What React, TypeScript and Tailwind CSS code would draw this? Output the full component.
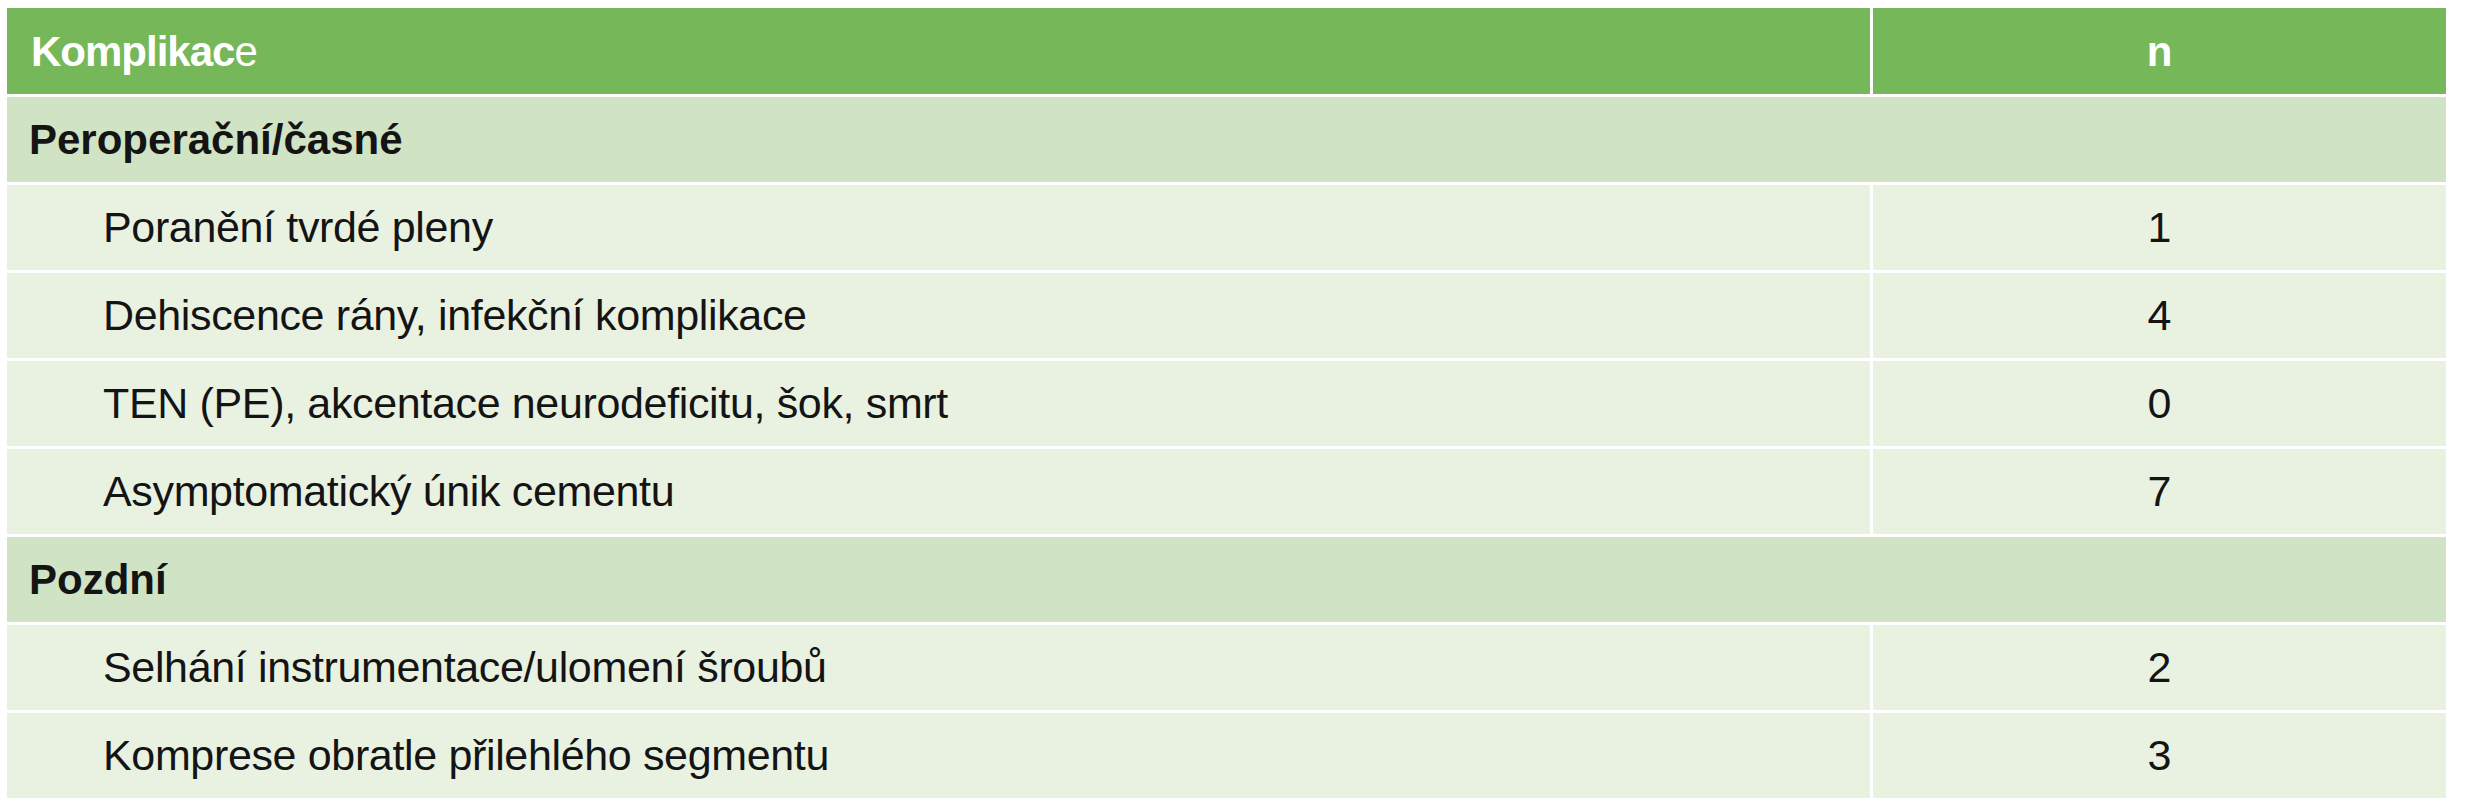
type Row =
  | { kind: 'section'; label: string }
  | { kind: 'item'; label: string; n: number }

const rows: Row[] = [
  { kind: 'section', label: 'Peroperační/časné' },
  { kind: 'item', label: 'Poranění tvrdé pleny', n: 1 },
  { kind: 'item', label: 'Dehiscence rány, infekční komplikace', n: 4 },
  { kind: 'item', label: 'TEN (PE), akcentace neurodeficitu, šok, smrt', n: 0 },
  { kind: 'item', label: 'Asymptomatický únik cementu', n: 7 },
  { kind: 'section', label: 'Pozdní' },
  { kind: 'item', label: 'Selhání instrumentace/ulomení šroubů', n: 2 },
  { kind: 'item', label: 'Komprese obratle přilehlého segmentu', n: 3 },
]

export default function App() {
  return (
    <div
      className="min-h-screen bg-white pl-[7px] pt-[8px] text-[#141414]"
      style={{ fontFamily: '"Liberation Sans", Arial, sans-serif' }}
    >
      <div className="grid w-[2439px] grid-cols-[1863px_573px] gap-x-[3px] gap-y-[3px]">
        {/* header */}
        <div className="flex h-[86px] items-center bg-[#76b859] pl-[24px] text-[42px] font-bold tracking-[-1px] text-white">
          <span>Komplikac</span>
          <span className="font-normal">e</span>
        </div>
        <div className="flex h-[86px] items-center justify-center bg-[#76b859] text-[42px] font-bold text-white">
          n
        </div>

        {rows.map((row, i) =>
          row.kind === 'section' ? (
            <div
              key={i}
              className="col-span-2 flex h-[85px] items-center bg-[#d0e4c5] pl-[22px] text-[42px] font-bold"
            >
              {row.label}
            </div>
          ) : (
            <div key={i} className="contents">
              <div className="flex h-[85px] items-center bg-[#e9f1e1] pl-[96px] text-[43px] tracking-[-0.35px]">
                {row.label}
              </div>
              <div className="flex h-[85px] items-center justify-center bg-[#e9f1e1] text-[43px]">
                {row.n}
              </div>
            </div>
          ),
        )}
      </div>
    </div>
  )
}
